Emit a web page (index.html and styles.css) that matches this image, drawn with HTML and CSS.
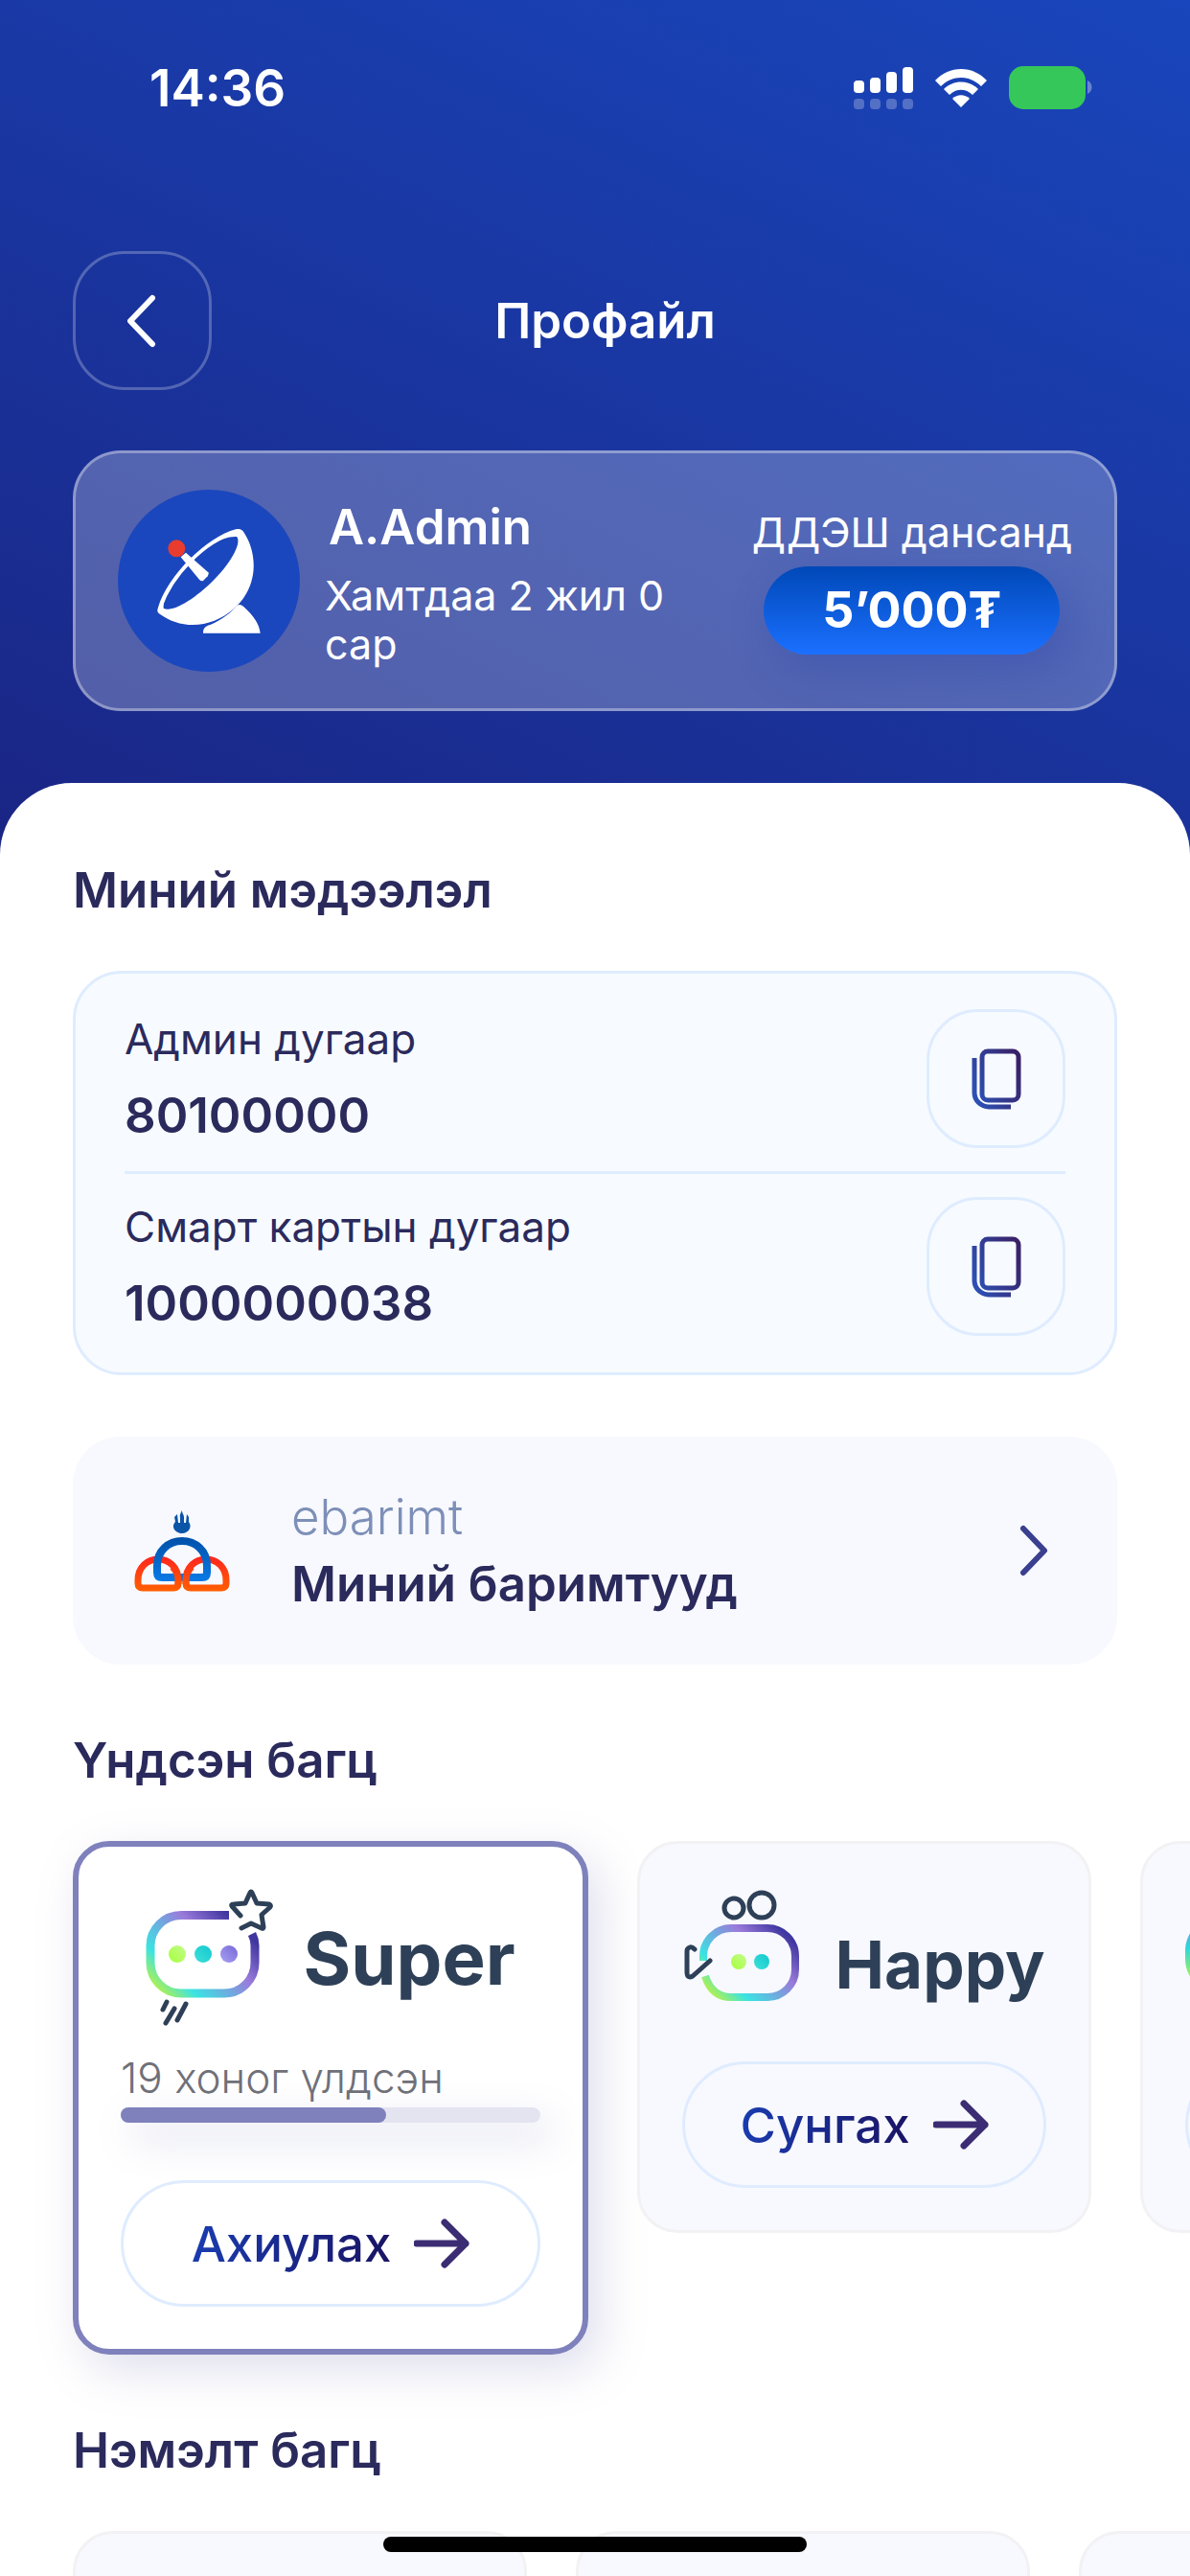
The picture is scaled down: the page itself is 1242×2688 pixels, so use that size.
FILE: index.html
```html
<!DOCTYPE html>
<html lang="mn">
<head>
    <meta charset="UTF-8">
    <meta name="viewport" content="width=device-width, initial-scale=1.0">
    <title>Профайл</title>
    <link rel="stylesheet" href="styles.css">
</head>
<body>
    <!-- Shared gradients and icons -->
    <svg class="defs" aria-hidden="true">
        <defs>
            <linearGradient id="superRing" gradientUnits="userSpaceOnUse" x1="10" y1="100" x2="85" y2="25">
                <stop offset="0" stop-color="#a8f05a"/>
                <stop offset="0.22" stop-color="#3be3e3"/>
                <stop offset="0.68" stop-color="#9a7bdb"/>
                <stop offset="1" stop-color="#4036a0"/>
            </linearGradient>
            <linearGradient id="happyRing" gradientUnits="userSpaceOnUse" x1="27" y1="107" x2="96" y2="38">
                <stop offset="0" stop-color="#a8f05a"/>
                <stop offset="0.22" stop-color="#3be3e3"/>
                <stop offset="0.68" stop-color="#9a7bdb"/>
                <stop offset="1" stop-color="#4036a0"/>
            </linearGradient>
            <linearGradient id="plainRing" x1="0" y1="1" x2="0" y2="0">
                <stop offset="0.2" stop-color="#a0f060"/>
                <stop offset="0.6" stop-color="#2bd8dc"/>
                <stop offset="1" stop-color="#9a7bdb"/>
            </linearGradient>
            <linearGradient id="dotGreen" x1="0" y1="1" x2="1" y2="0">
                <stop offset="0" stop-color="#a6ff3c"/>
                <stop offset="1" stop-color="#c3fb8c"/>
            </linearGradient>
            <linearGradient id="dotCyan" x1="0" y1="1" x2="1" y2="0">
                <stop offset="0" stop-color="#3fe0d8"/>
                <stop offset="1" stop-color="#12c8cf"/>
            </linearGradient>
            <linearGradient id="dotPurple" x1="0" y1="1" x2="1" y2="0">
                <stop offset="0" stop-color="#aaa0f0"/>
                <stop offset="1" stop-color="#7568d8"/>
            </linearGradient>
            <linearGradient id="copyStroke" gradientUnits="userSpaceOnUse" x1="0" y1="40" x2="52" y2="20">
                <stop offset="0" stop-color="#2d50b4"/>
                <stop offset="1" stop-color="#3a2268"/>
            </linearGradient>
            <linearGradient id="archBlue" gradientUnits="userSpaceOnUse" x1="0" y1="30" x2="0" y2="76">
                <stop offset="0" stop-color="#0050a8"/>
                <stop offset="1" stop-color="#0a7ae6"/>
            </linearGradient>
            <linearGradient id="archRed" gradientUnits="userSpaceOnUse" x1="0" y1="49" x2="0" y2="87">
                <stop offset="0" stop-color="#ff2320"/>
                <stop offset="1" stop-color="#ff6000"/>
            </linearGradient>
            <symbol id="copyIcon" viewBox="0 0 52 64">
                <rect x="11" y="3" width="38" height="51" rx="6"/>
                <path d="M3 10V46a15 15 0 0 0 15 15H41"/>
            </symbol>
            <symbol id="arrowIcon" viewBox="0 0 58 52">
                <path d="M3 26H54M32 4L54 26L32 48"/>
            </symbol>
        </defs>
    </svg>

    <div class="screen">
        <header class="header">
            <div class="status-bar">
                <span class="status-time">14:36</span>
                <div class="status-icons">
                    <svg width="62" height="44" viewBox="0 0 62 44" fill="#fff">
                        <rect x="0" y="14" width="11" height="13" rx="4"/>
                        <rect x="17" y="11" width="11" height="16" rx="4"/>
                        <rect x="34" y="5" width="11" height="22" rx="4"/>
                        <rect x="51" y="0" width="11" height="27" rx="4"/>
                        <g opacity="0.25">
                            <rect x="0" y="33" width="11" height="11" rx="4"/>
                            <rect x="17" y="33" width="11" height="11" rx="4"/>
                            <rect x="34" y="33" width="11" height="11" rx="4"/>
                            <rect x="51" y="33" width="11" height="11" rx="4"/>
                        </g>
                    </svg>
                    <svg width="54" height="40" viewBox="0 0 54 40" fill="#fff">
                        <path d="M0 12C15-4 39-4 54 12L48 18C36 6 18 6 6 18Z"/>
                        <path d="M9 21C19 11 35 11 45 21L39 27C32 20 22 20 15 27Z"/>
                        <path d="M18 31C23 26 31 26 36 31L27 40Z"/>
                    </svg>
                    <svg width="87" height="46" viewBox="0 0 87 46">
                        <rect width="80" height="45" rx="15" fill="#35c759"/>
                        <path d="M82 15C88 18 88 26 82 29Z" fill="#fff" opacity="0.35"/>
                    </svg>
                </div>
            </div>

            <div class="toolbar">
                <button class="icon-btn icon-btn-light" type="button" aria-label="Буцах">
                    <svg width="32" height="56" viewBox="0 0 32 56">
                        <path d="M26 4L3 28L26 52" fill="none" stroke="#fff" stroke-width="6" stroke-linecap="round" stroke-linejoin="round"/>
                    </svg>
                </button>
                <h1>Профайл</h1>
            </div>

            <section class="profile">
                <svg class="avatar" viewBox="9 3 570 570">
                    <circle cx="294" cy="288" r="285" fill="#1a47bd"/>
                    <path d="M378 127C390 124 396 126 402 134C450 205 448 310 372 376C305 435 210 445 137 390C131 384 133 378 135 372C165 270 290 150 378 127Z" fill="#fff"/>
                    <path d="M381 150C396 165 372 222 310 285C245 350 178 388 152 374C146 300 290 145 381 150Z" fill="#1a47bd"/>
                    <path d="M143 372C180 270 280 165 378 138" fill="none" stroke="#fff" stroke-width="8"/>
                    <path d="M222 200L292 262Q296 268 290 274L276 288Q270 290 264 284L206 214Z" fill="#fff"/>
                    <circle cx="193" cy="187" r="27" fill="#e73c2e"/>
                    <path d="M276 452C276 434 284 430 300 425C335 410 362 388 382 366Q391 359 402 368C440 402 452 428 455 452Z" fill="#fff"/>
                </svg>
                <div class="profile-info">
                    <h2>A.Admin</h2>
                    <p>Хамтдаа 2 жил 0 сар</p>
                </div>
                <div class="balance">
                    <span>ДДЭШ дансанд</span>
                    <strong>5’000₮</strong>
                </div>
            </section>
        </header>

        <main class="sheet">
            <h2 class="section-title">Миний мэдээлэл</h2>
            <div class="info-card">
                <div class="info-row">
                    <dl>
                        <dt>Админ дугаар</dt>
                        <dd>80100000</dd>
                    </dl>
                    <button class="icon-btn" type="button" aria-label="Админ дугаар хуулах">
                        <svg class="copy" width="52" height="64"><use href="#copyIcon"/></svg>
                    </button>
                </div>
                <div class="info-row">
                    <dl>
                        <dt>Смарт картын дугаар</dt>
                        <dd>1000000038</dd>
                    </dl>
                    <button class="icon-btn" type="button" aria-label="Смарт картын дугаар хуулах">
                        <svg class="copy" width="52" height="64"><use href="#copyIcon"/></svg>
                    </button>
                </div>
            </div>

            <a class="receipt-link" href="#">
                <svg width="100" height="88" viewBox="0 0 100 88" fill="none" stroke-width="7">
                    <path d="M4 78V75C4 61 14 53 25 53S46 61 46 75V78Q46 83 41 83H9Q4 83 4 78Z" stroke="url(#archRed)"/>
                    <path d="M54 78V75C54 61 64 53 75 53S96 61 96 75V78Q96 83 91 83H59Q54 83 54 78Z" stroke="url(#archRed)"/>
                    <path d="M24 67V60C24 44 36 34 50 34S76 44 76 60V67Q76 72 71 72H29Q24 72 24 67Z" stroke="url(#archBlue)" stroke-width="8"/>
                    <path d="M40 61Q46 67 46 75V79M60 61Q54 67 54 75V79" stroke="url(#archRed)"/>
                    <path d="M50 0C49 4 52 6 52 9L52 15L54 15L55 6L57 9L57 14C61 19 57 26 50 26S38 19 43 14L42 9L45 6L46 15L48 15L48 9C47 6 50 4 50 0Z" fill="#0a55a8"/>
                </svg>
                <span class="receipt-text">
                    <span class="receipt-brand">ebarimt</span>
                    <span class="receipt-name">Миний баримтууд</span>
                </span>
                <svg width="30" height="54" viewBox="0 0 30 54">
                    <path d="M4 4L26 27L4 50" fill="none" stroke="#3a3f8f" stroke-width="6" stroke-linecap="round" stroke-linejoin="round"/>
                </svg>
            </a>

            <h2 class="section-title">Үндсэн багц</h2>
            <div class="package-list">
                <article class="package package-active">
                    <div class="package-logo">
                        <svg width="134" height="144" viewBox="4 3 134 144" fill="none" stroke-linecap="round" stroke-linejoin="round">
                            <path d="M91 30.500H41a32 32 0 0 0-32 32V80a32 32 0 0 0 32 32H86a32 32 0 0 0 32-32V62Q118 56 115 50" stroke="url(#superRing)" stroke-width="9" stroke-linecap="butt"/>
                            <circle cx="37" cy="71" r="9" fill="url(#dotGreen)"/>
                            <circle cx="64" cy="71" r="9" fill="url(#dotCyan)"/>
                            <circle cx="91" cy="71" r="9" fill="url(#dotPurple)"/>
                            <path d="M103 31L94 21Q93 19 96 19L108 18L113 7Q114 5 115 7L120 18L133 19Q135 20 134 22L125 30L127 43Q127 45 125 44L114 39L104 44" stroke="#2e4057" stroke-width="5"/>
                            <path d="M26 121L22 129M34 128L25 143M46 123L37 140" stroke="#2e4057" stroke-width="5"/>
                        </svg>
                        <h3>Super</h3>
                    </div>
                    <label class="days-left" for="daysLeft">19 хоног үлдсэн</label>
                    <progress id="daysLeft" value="19" max="30"></progress>
                    <button class="package-btn" type="button">
                        <span>Ахиулах</span>
                        <svg class="arrow" width="58" height="52"><use href="#arrowIcon"/></svg>
                    </button>
                </article>

                <article class="package">
                    <div class="package-logo">
                        <svg width="120" height="122" viewBox="3 1 120 122" fill="none" stroke-linecap="round" stroke-linejoin="round">
                            <path d="M23 79V74a29 29 0 0 1 29-29H90a29 29 0 0 1 29 29V88a29 29 0 0 1-29 29H52Q32 117 25 95" stroke="url(#happyRing)" stroke-width="8" stroke-linecap="butt"/>
                            <circle cx="55" cy="24" r="10" stroke="#2e4057" stroke-width="5"/>
                            <circle cx="84" cy="21" r="13" stroke="#2e4057" stroke-width="5"/>
                            <circle cx="60" cy="80" r="8" fill="url(#dotGreen)"/>
                            <circle cx="84" cy="80" r="8" fill="url(#dotCyan)"/>
                            <path d="M14 67Q11 64 9 65Q6 66 6 69V91Q6 98 12 95L30 79" stroke="#2e4057" stroke-width="5"/>
                        </svg>
                        <h3 class="small">Happy</h3>
                    </div>
                    <button class="package-btn" type="button">
                        <span>Сунгах</span>
                        <svg class="arrow" width="58" height="52"><use href="#arrowIcon"/></svg>
                    </button>
                </article>

                <article class="package">
                    <div class="package-logo package-logo-start">
                        <svg width="120" height="122" viewBox="0 0 120 122">
                            <rect x="4" y="36" width="104" height="72" rx="32" fill="none" stroke="url(#plainRing)" stroke-width="8"/>
                        </svg>
                    </div>
                    <button class="package-btn" type="button" aria-label="Сунгах"></button>
                </article>
            </div>

            <h2 class="section-title">Нэмэлт багц</h2>
            <div class="package-list">
                <article class="package"></article>
                <article class="package"></article>
                <article class="package"></article>
            </div>
        </main>

        <div class="home-indicator"></div>
    </div>
</body>
</html>
```
FILE: styles.css
```css
* {
    box-sizing: border-box;
    margin: 0;
    padding: 0;
    font-family: Inter, "Noto Sans", sans-serif;
}
body {
    background-color: #fff;
    color: #2b2a5c;
}
button {
    background: none;
    cursor: pointer;
}
svg {
    flex: none;
}
.defs {
    position: absolute;
    width: 0;
    height: 0;
}
.screen {
    position: relative;
    height: 100vh;
    overflow: hidden;
}

/* Header */
.header {
    padding: 60px 76px 150px;
    background: linear-gradient(205deg, #1946bc, #1a2584);
    color: #fff;
}
.status-bar {
    display: flex;
    justify-content: space-between;
    align-items: center;
    padding: 0 26px 0 80px;
    margin-bottom: 138px;
    line-height: 64px;
}
.status-time {
    font-size: 53px;
    font-weight: 600;
}
.status-icons {
    display: flex;
    align-items: center;
    gap: 23px;
}
.toolbar {
    display: grid;
    grid-template-columns: 145px 1fr 124px;
    align-items: center;
}
.toolbar h1 {
    font-size: 51px;
    font-weight: 600;
    text-align: center;
}
.icon-btn {
    display: flex;
    justify-content: center;
    align-items: center;
    width: 145px;
    height: 145px;
    border: 3px solid #dfecff;
    border-radius: 54px;
}
.icon-btn-light {
    border-color: rgba(255, 255, 255, 0.25);
}
.profile {
    display: flex;
    align-items: center;
    gap: 26px;
    margin-top: 63px;
    padding: 38px 44px;
    background-color: rgba(255, 255, 255, 0.25);
    border: 3px solid rgba(255, 255, 255, 0.35);
    border-radius: 50px;
}
.avatar {
    width: 190px;
    height: 190px;
}
.profile-info {
    flex: 1;
    padding-top: 6px;
}
.profile-info h2 {
    padding-left: 4px;
    margin-bottom: 16px;
    font-size: 51px;
    font-weight: 600;
    line-height: 60px;
}
.profile-info p {
    font-size: 43px;
    line-height: 51px;
}
.balance {
    display: flex;
    flex-direction: column;
    align-items: center;
    gap: 10px;
    font-size: 43px;
    line-height: 51px;
}
.balance strong {
    padding: 0 61px;
    border-radius: 46px;
    background: linear-gradient(#0048b8, #1b70ff);
    box-shadow: 12px 16px 48px rgba(32, 60, 160, 0.3);
    font-size: 52px;
    font-weight: 700;
    line-height: 92px;
}

/* White sheet */
.sheet {
    margin-top: -75px;
    padding: 82px 76px 0;
    background-color: #fff;
    border-radius: 75px 75px 0 0;
}
.section-title {
    margin: 70px 0 54px;
    font-size: 51px;
    font-weight: 600;
    line-height: 60px;
}
.section-title:first-child {
    margin-top: 0;
}
.info-card {
    padding: 37px 51px 38px;
    background-color: #f7fbff;
    border: 3px solid #dfecff;
    border-radius: 51px;
}
.info-row {
    display: flex;
    justify-content: space-between;
    align-items: center;
}
.info-row + .info-row {
    margin-top: 24px;
    padding-top: 24px;
    border-top: 3px solid #dfecff;
}
.info-row dt {
    font-size: 44px;
    line-height: 54px;
}
.info-row dd {
    margin-top: 23px;
    font-size: 51px;
    font-weight: 600;
    line-height: 60px;
}
.copy {
    fill: none;
    stroke: url(#copyStroke);
    stroke-width: 5px;
}
.receipt-link {
    display: flex;
    align-items: center;
    margin-top: 64px;
    padding: 49px 72px 49px 64px;
    background-color: #f8f9fe;
    border-radius: 50px;
    color: inherit;
    text-decoration: none;
}
.receipt-text {
    display: flex;
    flex: 1;
    flex-direction: column;
    margin-left: 64px;
    font-size: 51px;
    line-height: 70px;
}
.receipt-brand {
    color: #7d8fb8;
    font-weight: 300;
}
.receipt-name {
    font-weight: 600;
}

/* Packages */
.package-list {
    display: flex;
    align-items: flex-start;
    gap: 51px;
    margin-right: -76px;
}
.package {
    flex: 0 0 474px;
    min-height: 409px;
    padding: 44px;
    background-color: #f8f9fe;
    border: 3px solid #f2f2f4;
    border-radius: 42px;
}
.package-active {
    flex-basis: 538px;
    background-color: #fff;
    border: 6px solid #7f81bc;
    border-radius: 38px;
    box-shadow: 12px 16px 48px rgba(127, 129, 188, 0.25);
}
.package-logo {
    display: flex;
    justify-content: center;
    align-items: flex-end;
    gap: 38px;
    margin-bottom: 61px;
    color: #2e4057;
}
.package-logo h3 {
    font-size: 76px;
    font-weight: 700;
    line-height: 80px;
}
.package-logo h3.small {
    font-size: 69px;
}
.package-active .package-logo {
    align-items: center;
    gap: 30px;
    margin-bottom: 26px;
}
.package-logo-start {
    justify-content: flex-start;
}
.days-left {
    display: block;
    color: #6f7078;
    font-size: 44px;
    font-weight: 300;
    line-height: 54px;
}
progress {
    display: block;
    width: 100%;
    height: 16px;
    margin: 4px 0 60px;
    appearance: none;
    border: none;
    border-radius: 8px;
    box-shadow: 12px 16px 40px rgba(127, 129, 188, 0.3);
}
progress::-webkit-progress-bar {
    background-color: #e4e4f1;
    border-radius: 8px;
}
progress::-webkit-progress-value {
    background-color: #7f81bc;
    border-radius: 8px;
}
.package-btn {
    display: flex;
    justify-content: center;
    align-items: center;
    gap: 24px;
    width: 100%;
    height: 132px;
    border: 3px solid #dfecff;
    border-radius: 66px;
    font-size: 51px;
    font-weight: 500;
}
.package-btn span {
    background: linear-gradient(to right, #1a3cb0, #1a1464);
    background-clip: text;
    color: transparent;
}
.arrow {
    fill: none;
    stroke: #3b2c73;
    stroke-width: 7px;
    stroke-linecap: round;
    stroke-linejoin: round;
}
.home-indicator {
    position: absolute;
    bottom: 25px;
    left: 50%;
    width: 442px;
    height: 16px;
    margin-left: -221px;
    background-color: #000;
    border-radius: 8px;
}
```
